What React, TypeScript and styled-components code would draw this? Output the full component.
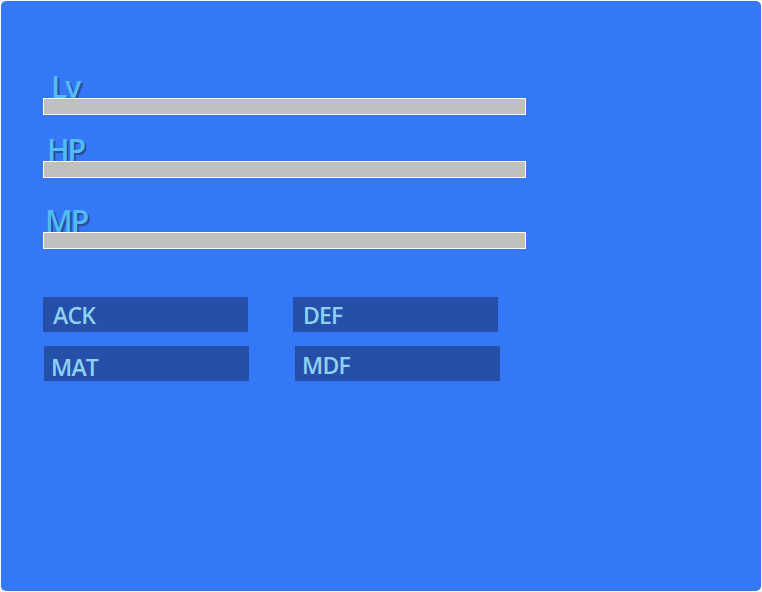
import styled, { createGlobalStyle } from "styled-components";

const GlobalStyle = createGlobalStyle`
  html, body {
    margin: 0;
    padding: 0;
    background: #ffffff;
  }
  body {
    font-family: "Open Sans", "Noto Sans", sans-serif;
  }
`;

const Panel = styled.div`
  box-sizing: border-box;
  width: 760px;
  height: 590px;
  margin: 1px;
  border-radius: 5px;
  background: #3478f8;
  padding: 74px 0 0 42px;
  display: flex;
  flex-direction: column;
`;

const StatGroup = styled.div<{ $gap: number }>`
  display: flex;
  flex-direction: column;
  margin-top: ${(p) => p.$gap}px;
`;

const StatLabel = styled.div<{ $indent: number }>`
  height: 24px;
  line-height: 24px;
  padding-left: ${(p) => p.$indent}px;
  font-family: "Open Sans", "Noto Sans", sans-serif;
  font-size: 30px;
  font-weight: 600;
  letter-spacing: -2px;
  color: #52bcf4;
  text-shadow: 2px 2px 0 #2b4f96;
`;

const Bar = styled.div`
  box-sizing: border-box;
  width: 483px;
  height: 17px;
  margin-top: -1px;
  background: #c0c0c0;
  border: 1px solid #ffffff;
`;

const AttrGrid = styled.div`
  display: grid;
  grid-template-columns: 205px 205px;
  column-gap: 45px;
  row-gap: 14px;
  margin-top: 48px;
`;

const AttrBox = styled.div<{ $shift: number; $pad: number; $drop: number }>`
  box-sizing: border-box;
  width: 205px;
  height: 35px;
  margin-left: ${(p) => p.$shift}px;
  padding: ${(p) => p.$drop}px 0 0 ${(p) => p.$pad}px;
  background: #254fa8;
  color: #8fd1f5;
  font-family: "Open Sans", "Noto Sans", sans-serif;
  font-size: 23px;
  font-weight: 600;
  letter-spacing: -0.8px;
  line-height: 24px;
`;

const stats = [
  { name: "Lv", gap: 0, indent: 8 },
  { name: "HP", gap: 23, indent: 4 },
  { name: "MP", gap: 31, indent: 2 },
];

const attrs = [
  { name: "ACK", shift: 0, pad: 10, drop: 6 },
  { name: "DEF", shift: 0, pad: 10, drop: 6 },
  { name: "MAT", shift: 1, pad: 7, drop: 9 },
  { name: "MDF", shift: 2, pad: 7, drop: 7 },
];

export default function App() {
  return (
    <>
      <GlobalStyle />
      <Panel>
        {stats.map((s) => (
          <StatGroup key={s.name} $gap={s.gap}>
            <StatLabel $indent={s.indent}>{s.name}</StatLabel>
            <Bar />
          </StatGroup>
        ))}
        <AttrGrid>
          {attrs.map((a) => (
            <AttrBox key={a.name} $shift={a.shift} $pad={a.pad} $drop={a.drop}>
              {a.name}
            </AttrBox>
          ))}
        </AttrGrid>
      </Panel>
    </>
  );
}
